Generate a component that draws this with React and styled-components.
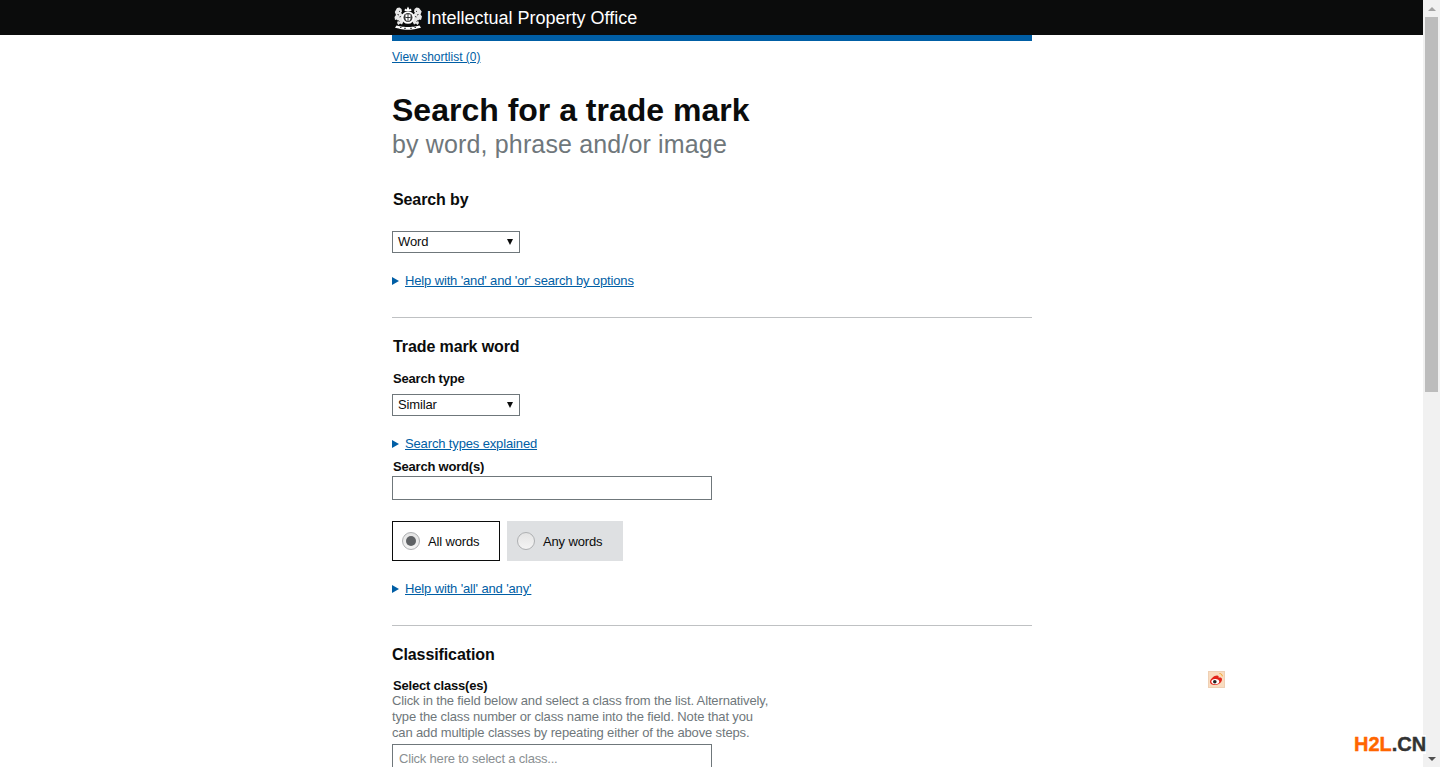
import * as React from "react";
import styled, { createGlobalStyle } from "styled-components";

const Global = createGlobalStyle`
  html, body {
    margin: 0;
    height: 100%;
    overflow: hidden;
    background: #fff;
    font-family: "Liberation Sans", Arial, sans-serif;
    color: #0b0c0c;
  }
`;

const Page = styled.div`
  display: flex;
  height: 767px;
  overflow: hidden;
  position: relative;
`;

const Main = styled.div`
  flex: 1;
  min-width: 0;
`;

const Header = styled.header`
  background: #0b0c0c;
  height: 35px;
`;

const HeaderInner = styled.div`
  width: 640px;
  margin: 0 auto;
  height: 35px;
  display: flex;
  align-items: center;
  gap: 5px;
  padding-left: 2px;
  box-sizing: border-box;
`;

const OfficeName = styled.span`
  color: #fff;
  font-size: 18px;
  line-height: 35px;
  padding-top: 1px;
`;

const Content = styled.div`
  width: 640px;
  margin: 0 auto;
  border-top: 6px solid #005ea5;
  position: relative;
  left: 0.5px;
`;

const Link = styled.a`
  color: #005ea5;
  font-size: 12px;
  line-height: 16px;
  text-decoration: underline;
`;

const Shortlist = styled.div`
  padding-top: 8px;
  font-size: 12px;
  line-height: 16px;
  height: 16px;
`;

const Title = styled.h1`
  margin: 27px 0 0;
  font-size: 32px;
  line-height: 36px;
  font-weight: 700;
`;

const Subtitle = styled.div`
  font-size: 25px;
  line-height: 32px;
  color: #6f777b;
  letter-spacing: 0.15px;
`;

const Section = styled.section`
  padding-bottom: ${(p) => p.$bottom || 0}px;
  border-bottom: ${(p) => (p.$rule ? "1px solid #bfc1c3" : "none")};
`;

const Heading = styled.h2`
  margin: ${(p) => p.$top}px 0 0;
  padding-left: ${(p) => (p.$flush ? 0 : 1)}px;
  font-size: 16px;
  line-height: 20px;
  font-weight: 700;
  letter-spacing: -0.1px;
`;

const Label = styled.div`
  margin-top: ${(p) => p.$top}px;
  padding-left: 1px;
  font-size: 13px;
  line-height: 16px;
  font-weight: 700;
  letter-spacing: -0.2px;
`;

const Select = styled.div`
  margin-top: ${(p) => p.$top}px;
  width: 128px;
  height: 22px;
  box-sizing: border-box;
  border: 1px solid #6f777b;
  display: flex;
  align-items: center;
  justify-content: space-between;
  padding: 0 6px 2px 5px;
  font-size: 13px;
  letter-spacing: -0.14px;
  color: #0b0c0c;
`;

const Caret = styled.span`
  width: 0;
  height: 0;
  margin-top: 2px;
  border-left: 3px solid transparent;
  border-right: 3px solid transparent;
  border-top: 6px solid #0b0c0c;
`;

const HelpRow = styled.div`
  margin-top: ${(p) => p.$top}px;
  display: flex;
  align-items: center;
  gap: 6px;
  height: 16px;
`;

const HelpArrow = styled.span`
  width: 0;
  height: 0;
  border-top: 4px solid transparent;
  border-bottom: 4px solid transparent;
  border-left: 7px solid #005ea5;
`;

const HelpLink = styled(Link)`
  font-size: 13px;
  letter-spacing: -0.14px;
`;

const TextInput = styled.div`
  margin-top: ${(p) => p.$top}px;
  width: 320px;
  height: ${(p) => p.$height}px;
  box-sizing: border-box;
  border: 1px solid #6f777b;
  padding: 6px 6px;
  font-size: 13px;
  line-height: 16px;
  letter-spacing: -0.2px;
  color: #8a8f92;
`;

const RadioRow = styled.div`
  margin-top: 21px;
  display: flex;
  gap: 7px;
`;

const RadioOption = styled.div`
  height: 40px;
  width: ${(p) => p.$width}px;
  box-sizing: border-box;
  display: flex;
  align-items: center;
  gap: 8px;
  padding-left: 9px;
  font-size: 13px;
  letter-spacing: -0.14px;
  background: ${(p) => (p.$selected ? "#fff" : "#dee0e2")};
  border: 1px solid ${(p) => (p.$selected ? "#0b0c0c" : "#dee0e2")};
`;

const RadioDot = styled.span`
  width: 18px;
  height: 18px;
  border-radius: 50%;
  box-sizing: border-box;
  border: 1px solid #aeb0b2;
  background: linear-gradient(#e4e4e4, #f4f4f4);
  display: flex;
  align-items: center;
  justify-content: center;
  &::after {
    content: "";
    display: ${(p) => (p.$checked ? "block" : "none")};
    width: 10px;
    height: 10px;
    border-radius: 50%;
    background: #5f6265;
  }
`;

const Hint = styled.div`
  width: 378px;
  margin-top: -1px;
  font-size: 13px;
  line-height: 16px;
  color: #6f777b;
  letter-spacing: -0.14px;
`;

const Scrollbar = styled.div`
  width: 17px;
  height: 767px;
  background: #f1f1f1;
  display: flex;
  flex-direction: column;
  align-items: center;
  justify-content: space-between;
  position: relative;
`;

const ScrollArrow = styled.span`
  height: 17px;
  display: flex;
  align-items: center;
  justify-content: center;
  &::after {
    content: "";
    width: 0;
    height: 0;
    border-left: 4px solid transparent;
    border-right: 4px solid transparent;
    ${(p) => (p.$up ? "border-bottom: 4px solid #a3a3a3;" : "border-top: 4px solid #505050;")}
  }
`;

const ScrollThumb = styled.div`
  position: absolute;
  top: 17px;
  left: 2px;
  right: 2px;
  height: 375px;
  background: #bcbcbc;
`;

const WeiboBadge = styled.div`
  position: absolute;
  left: 1208px;
  top: 671px;
  width: 17px;
  height: 17px;
  background: #f9dcc0;
  border: 1px solid #efd0b4;
  box-sizing: border-box;
`;

const Watermark = styled.div`
  position: absolute;
  left: 1354px;
  top: 735px;
  font-size: 20px;
  line-height: 19px;
  font-weight: 700;
  color: #ff6600;
  background: #fff;
  -webkit-text-stroke: 0.4px currentColor;
  span {
    color: #333;
  }
`;

const Crest = () => (
  <svg width="28" height="24" viewBox="0 0 28 24" fill="#e8e8e8">
    {/* crown */}
    <path d="M10.500 5l.5-2.500 1.500 1 1.500-3 1.500 3 1.500-1 .5 2.500z" fill="#fff" />
    {/* lion */}
    <path d="M3 2l2.500-.5L7.500 3l.5 2.500L7 7l2 1.500-.5 4 1 3-1.500 3-2-1-1.500 1.500-1.500-2 1-2.500-1.500-1-1.500.5L.5 11l1.500-2L.8 6z" />
    {/* unicorn */}
    <path d="M25 2l-2.500-.5L20.500 3 20 5.500 21 7l-2 1.500.5 4-1 3 1.500 3 2-1 1.500 1.500 1.500-2-1-2.500 1.500-1 1.500.5 1-3.500-1.500-2 1.200-3z" />
    {/* shield, garter ring */}
    <circle cx="14" cy="11.500" r="6.300" fill="#fff" />
    <circle cx="14" cy="11.500" r="4.500" fill="#3a3a3a" />
    <path d="M11.500 8.500h5v4c0 1.500-1.500 2.500-2.500 3-1-.5-2.500-1.500-2.500-3z" fill="#fff" />
    <path d="M14 8.500v7M11.500 11.500h5" stroke="#0b0c0c" strokeWidth="0.8" />
    {/* motto */}
    <path d="M2.500 19.500c3 .5 5 1.500 11.500 1.500s8.500-1 11.500-1.500l1.500 2.300c-3 .5-6.500 2-13 2s-10-1.500-13-2z" fill="#fff" />
    <path d="M5 5l1 .8M3.500 8.500l1.500.5M5.500 11l1.500-.5M4 14.500l1.500 1M23 5l-1 .8M24.500 8.500l-1.500.5M22.500 11l-1.500-.5M24 14.500l-1.500 1M6 21.500h1.500M10 22.300h2M16 22.300h2M20.500 21.500h1.500" stroke="#0b0c0c" strokeWidth="0.8" />
  </svg>
);

const WeiboIcon = () => (
  <svg width="15" height="15" viewBox="0 0 15 15">
    <path d="M10.500 1.500c1.600 0 2.800 1.200 2.800 2.800" fill="none" stroke="#f5a623" strokeWidth="1" />
    <path d="M1 10c0-3 4-6.500 7-6.500 1.500 0 2 1 1.600 2.200 1.700-.6 3.400 0 3.400 1.600C13 10.500 9.500 13 6 13c-2.800 0-5-1.200-5-3z" fill="#e2231a" />
    <ellipse cx="6.300" cy="9.600" rx="3.900" ry="2.700" fill="#fff" />
    <circle cx="5.800" cy="9.700" r="1.800" fill="#222" />
  </svg>
);

export default function App() {
  return (
    <Page>
      <Global />
      <Main>
        <Header>
          <HeaderInner>
            <Crest />
            <OfficeName>Intellectual Property Office</OfficeName>
          </HeaderInner>
        </Header>
        <Content>
          <Shortlist>
            <Link>View shortlist (0)</Link>
          </Shortlist>
          <Title>Search for a trade mark</Title>
          <Subtitle>by word, phrase and/or image</Subtitle>

          <Section $rule $bottom={28}>
            <Heading $top={30}>Search by</Heading>
            <Select $top={21}>
              Word
              <Caret />
            </Select>
            <HelpRow $top={20}>
              <HelpArrow />
              <HelpLink>Help with 'and' and 'or' search by options</HelpLink>
            </HelpRow>
          </Section>

          <Section $rule $bottom={28}>
            <Heading $top={19}>Trade mark word</Heading>
            <Label $top={14}>Search type</Label>
            <Select $top={7}>
              Similar
              <Caret />
            </Select>
            <HelpRow $top={20}>
              <HelpArrow />
              <HelpLink>Search types explained</HelpLink>
            </HelpRow>
            <Label $top={7}>Search word(s)</Label>
            <TextInput $top={1} $height={24} />
            <RadioRow>
              <RadioOption $selected $width={108}>
                <RadioDot $checked />
                All words
              </RadioOption>
              <RadioOption $width={116}>
                <RadioDot />
                Any words
              </RadioOption>
            </RadioRow>
            <HelpRow $top={20}>
              <HelpArrow />
              <HelpLink>Help with 'all' and 'any'</HelpLink>
            </HelpRow>
          </Section>

          <Section>
            <Heading $top={19} $flush>Classification</Heading>
            <Label $top={13}>Select class(es)</Label>
            <Hint>
              Click in the field below and select a class from the list. Alternatively,
              type the class number or class name into the field. Note that you
              can add multiple classes by repeating either of the above steps.
            </Hint>
            <TextInput $top={3} $height={40}>Click here to select a class...</TextInput>
          </Section>
        </Content>
      </Main>
      <Scrollbar>
        <ScrollArrow $up />
        <ScrollThumb />
        <ScrollArrow />
      </Scrollbar>
      <WeiboBadge>
        <WeiboIcon />
      </WeiboBadge>
      <Watermark>
        H2L<span>.CN</span>
      </Watermark>
    </Page>
  );
}
